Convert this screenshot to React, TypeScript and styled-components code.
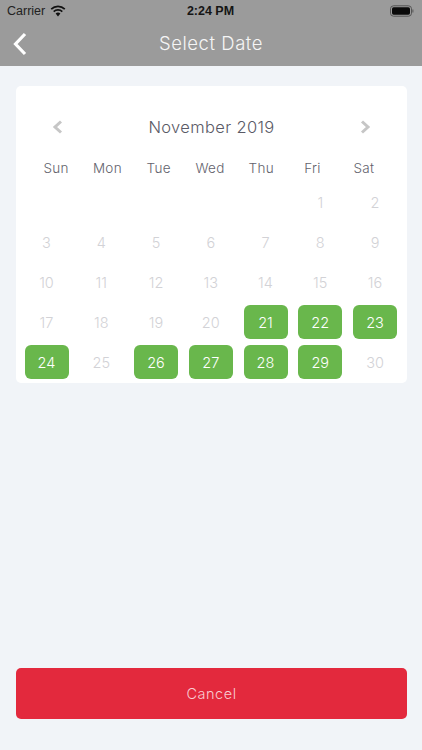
import React from "react";
import styled, { createGlobalStyle } from "styled-components";

const Global = createGlobalStyle`
  html, body { margin: 0; padding: 0; background: #f1f4f8; }
  #root { width: 422px; height: 750px; overflow: hidden; }
  * { box-sizing: border-box; }
`;

const Screen = styled.div`
  width: 422px;
  height: 750px;
  display: flex;
  flex-direction: column;
  background: #f1f4f8;
  font-family: Inter, "Open Sans", sans-serif;
`;

const Header = styled.header`
  height: 66px;
  flex: none;
  background: #9b9b9b;
  display: flex;
  flex-direction: column;
`;

const StatusBar = styled.div`
  height: 22px;
  padding: 0 8px 0 7px;
  display: grid;
  grid-template-columns: 1fr auto 1fr;
  align-items: center;
  color: #111;
  font-family: "Liberation Sans", Arial, sans-serif;
  font-size: 12.5px;
`;

const Carrier = styled.div`
  display: flex;
  align-items: center;
  gap: 5px;
  color: #222;
`;

const Clock = styled.div`
  font-weight: 700;
  font-size: 12.5px;
  color: #151515;
`;

const Battery = styled.div`
  justify-self: end;
  display: flex;
`;

const NavBar = styled.div`
  flex: 1;
  position: relative;
  display: flex;
  align-items: center;
  justify-content: center;
  padding-bottom: 2px;
  color: #f5f5f5;
  font-size: 18.5px;
  font-weight: 300;
  letter-spacing: 0.55px;
`;

const BackIcon = styled.svg`
  position: absolute;
  left: 12px;
  top: 10px;
`;

const Main = styled.main`
  flex: 1;
  display: flex;
  flex-direction: column;
  justify-content: space-between;
  padding: 20px 15.5px 31px;
`;

const Card = styled.section`
  height: 297px;
  background: #fff;
  border-radius: 5px;
  padding: 0 9px;
  overflow: hidden;
`;

const MonthRow = styled.div`
  height: 42px;
  margin: 20px 0 0;
  padding: 0 26px 0 27px;
  display: flex;
  align-items: center;
  justify-content: space-between;
  color: #5a5a66;
  font-size: 16.5px;
  font-weight: 300;
  letter-spacing: 0.35px;
`;

const WeekRow = styled.div`
  margin: 3px 8px 0 6px;
  height: 34px;
  display: grid;
  grid-template-columns: repeat(7, 1fr);
  align-items: center;
  text-align: center;
  color: #62626c;
  font-size: 13.5px;
  font-weight: 300;
  letter-spacing: 0.3px;
`;

const DaysGrid = styled.div`
  display: grid;
  grid-template-columns: repeat(7, 44px);
  grid-auto-rows: 34px;
  column-gap: 10.75px;
  row-gap: 6px;
`;

const Day = styled.div<{ $on?: boolean }>`
  display: flex;
  align-items: center;
  justify-content: center;
  border-radius: 6px;
  font-size: 14.5px;
  font-weight: 300;
  background: ${(p) => (p.$on ? "#69b74c" : "transparent")};
  color: ${(p) => (p.$on ? "#fff" : "#d2d2d6")};
`;

const CancelButton = styled.button`
  height: 51px;
  border: 0;
  border-radius: 5px;
  background: #e3293d;
  color: #f8ccd1;
  font-family: inherit;
  font-size: 14.5px;
  font-weight: 300;
  letter-spacing: 0.55px;
  padding: 0 0 0 1px;
`;

const enabled = new Set([21, 22, 23, 24, 26, 27, 28, 29]);
const cells: (number | null)[] = [null, null, null, null, null];
for (let d = 1; d <= 30; d++) cells.push(d);

const Chevron = ({ flip }: { flip?: boolean }) => (
  <svg width="12" height="14" viewBox="0 0 12 14" aria-hidden>
    <path
      d={flip ? "M3 1.5 L9 7 L3 12.5" : "M9 1.5 L3 7 L9 12.5"}
      fill="none"
      stroke="#c6c6c6"
      strokeWidth="3"
    />
  </svg>
);

export default function App() {
  return (
    <Screen>
      <Global />
      <Header>
        <StatusBar>
          <Carrier>
            Carrier
            <svg width="16" height="12" viewBox="0 0 16 12" aria-hidden>
              <path d="M8 11.5 L5.6 8.6 A3.6 3.6 0 0 1 10.4 8.6 Z" fill="#111" />
              <path d="M3.7 6.7 A6.2 6.2 0 0 1 12.3 6.7" fill="none" stroke="#111" strokeWidth="1.7" />
              <path d="M1.2 4.2 A9.8 9.8 0 0 1 14.8 4.2" fill="none" stroke="#111" strokeWidth="1.7" />
            </svg>
          </Carrier>
          <Clock>2:24 PM</Clock>
          <Battery>
            <svg width="24" height="12" viewBox="0 0 24 12" aria-hidden>
              <rect x="0.5" y="0.8" width="21" height="10.4" rx="3" fill="none" stroke="#555" />
              <rect x="2" y="2.3" width="18" height="7.4" rx="1.6" fill="#0a0a0a" />
              <rect x="22.4" y="4.5" width="1" height="3" fill="#555" />
            </svg>
          </Battery>
        </StatusBar>
        <NavBar>
          <BackIcon width="16" height="24" viewBox="0 0 16 24" aria-hidden>
            <path d="M13 2 L3.5 12 L13 22" fill="none" stroke="#fff" strokeWidth="3.2" />
          </BackIcon>
          Select Date
        </NavBar>
      </Header>
      <Main>
        <Card>
          <MonthRow>
            <Chevron />
            <span>November 2019</span>
            <Chevron flip />
          </MonthRow>
          <WeekRow>
            {["Sun", "Mon", "Tue", "Wed", "Thu", "Fri", "Sat"].map((d) => (
              <span key={d}>{d}</span>
            ))}
          </WeekRow>
          <DaysGrid>
            {cells.map((d, i) => (
              <Day key={i} $on={d !== null && enabled.has(d)}>
                {d}
              </Day>
            ))}
          </DaysGrid>
        </Card>
        <CancelButton>Cancel</CancelButton>
      </Main>
    </Screen>
  );
}
